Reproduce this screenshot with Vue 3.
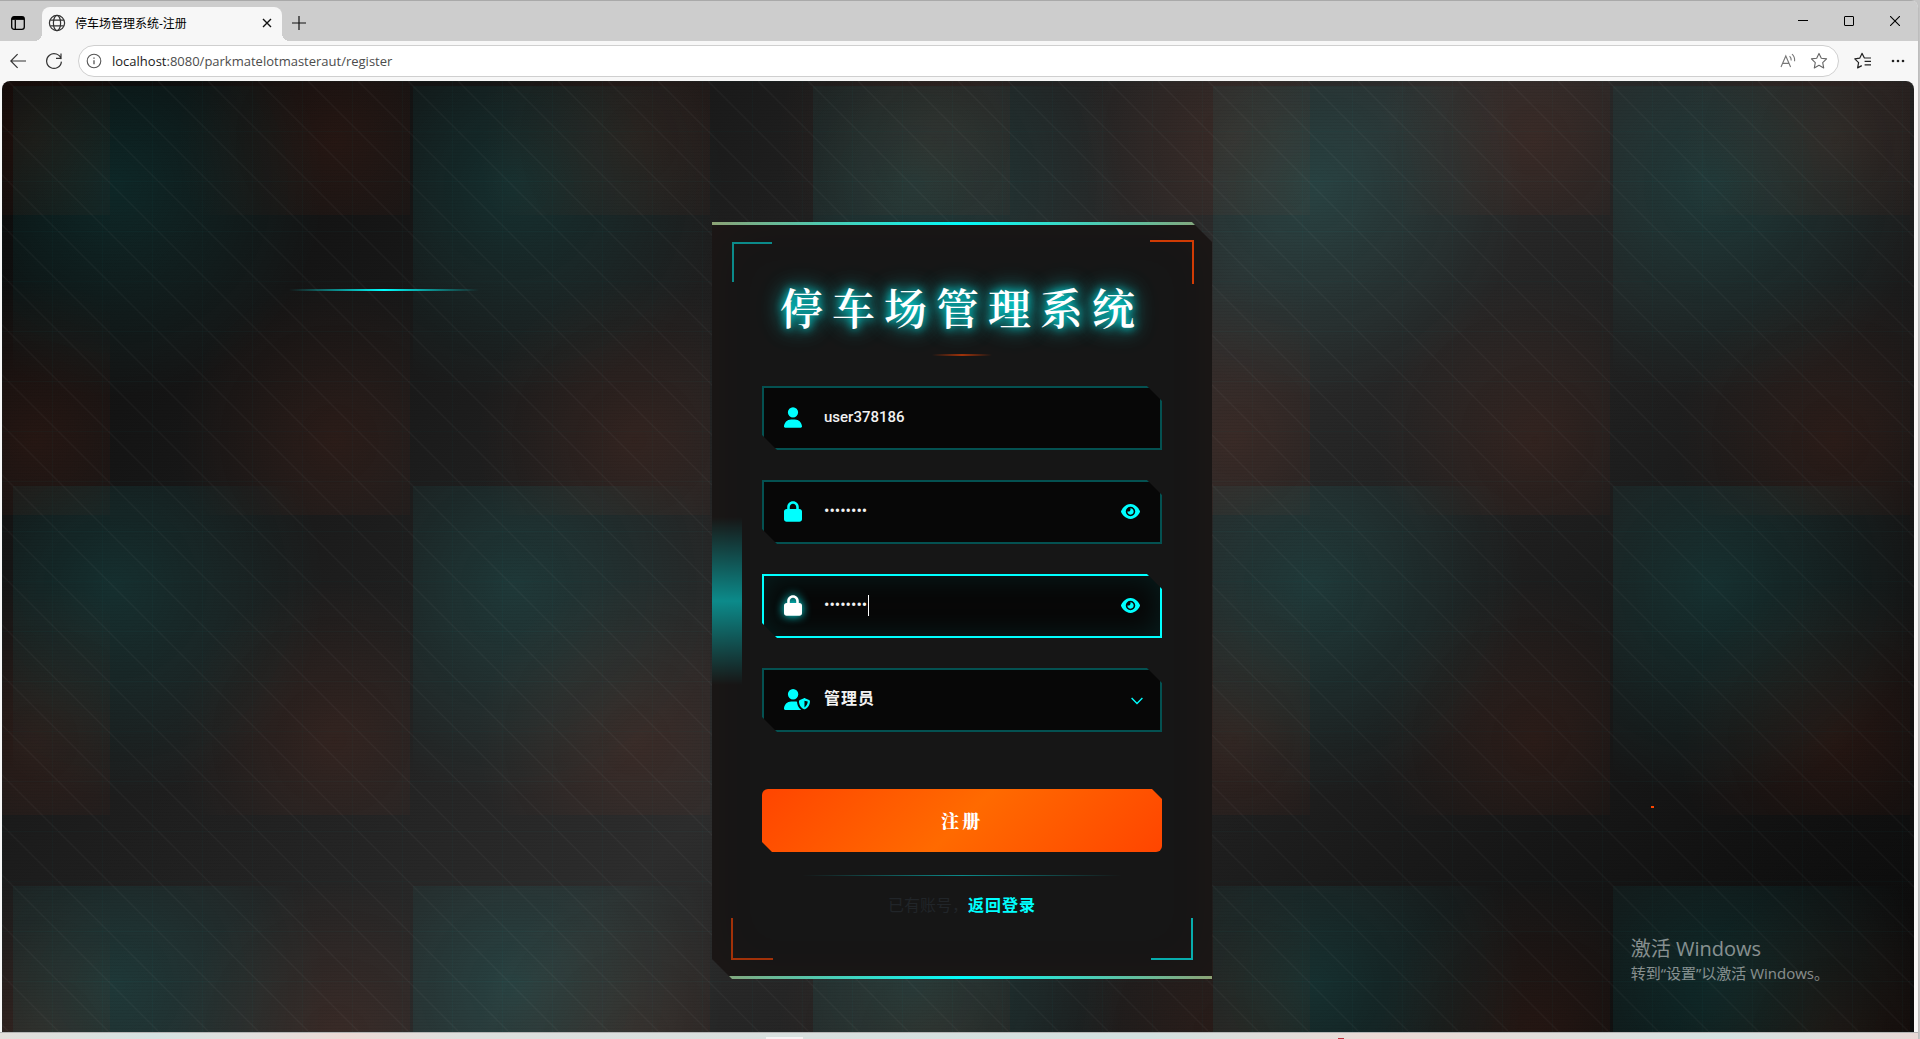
<script setup>
import { ref } from 'vue'

const form = ref({
  username: 'user378186',
  password: '12345678',
  confirm: '12345678',
  role: 'admin'
})

// which password boxes are shown as plain text
const visible = ref({ password: false, confirm: false })

const toggle = (key) => {
  visible.value[key] = !visible.value[key]
}

const passwordFields = [
  { key: 'password', label: '密码', active: false },
  { key: 'confirm', label: '确认密码', active: true }
]
</script>

<template>
  <div class="browser">
    <header class="tab-strip">
      <button class="icon-btn tab-actions" aria-label="标签页操作">
        <svg width="16" height="16" viewBox="0 0 16 16" fill="none" stroke="#000" stroke-width="1.3">
          <rect x="1.7" y="1.7" width="12.6" height="12.6" rx="2.4" />
          <path d="M2 3.4h12" stroke-width="3" />
          <path d="M5.3 5v9" />
        </svg>
      </button>
      <div class="tab">
        <svg width="18" height="18" viewBox="0 0 18 18" fill="none" stroke="#333" stroke-width="1.2">
          <circle cx="9" cy="9" r="7.6" />
          <ellipse cx="9" cy="9" rx="3.6" ry="7.6" />
          <path d="M2.2 6.2h13.6M2.2 11.8h13.6" />
        </svg>
        <span class="tab-title">停车场管理系统-注册</span>
        <button class="icon-btn" aria-label="关闭标签页">
          <svg width="10" height="10" viewBox="0 0 10 10" stroke="#111" stroke-width="1.4">
            <path d="M1 1l8 8M9 1l-8 8" />
          </svg>
        </button>
      </div>
      <button class="icon-btn new-tab" aria-label="新建标签页">
        <svg width="14" height="14" viewBox="0 0 14 14" stroke="#111" stroke-width="1.2">
          <path d="M7 0v14M0 7h14" />
        </svg>
      </button>
      <div class="window-buttons">
        <button class="icon-btn" aria-label="最小化">
          <svg width="10" height="10" viewBox="0 0 10 10" stroke="#000"><path d="M0 4.5h10" /></svg>
        </button>
        <button class="icon-btn" aria-label="最大化">
          <svg width="10" height="10" viewBox="0 0 10 10" fill="none" stroke="#000">
            <rect x=".5" y=".5" width="9" height="9" rx=".5" />
          </svg>
        </button>
        <button class="icon-btn" aria-label="关闭">
          <svg width="10" height="10" viewBox="0 0 10 10" stroke="#000" stroke-width="1.1">
            <path d="M0 0l10 10M10 0L0 10" />
          </svg>
        </button>
      </div>
    </header>

    <div class="toolbar">
      <button class="icon-btn" aria-label="返回">
        <svg width="16" height="16" viewBox="0 0 16 16" fill="none" stroke="#333" stroke-width="1.2">
          <path d="M16 8H.8M7.6 1.2L.8 8l6.8 6.8" />
        </svg>
      </button>
      <button class="icon-btn" aria-label="刷新">
        <svg width="18" height="18" viewBox="0 0 18 18" fill="none" stroke="#333" stroke-width="1.2">
          <path d="M16.2 7.2A7.4 7.4 0 1 0 16.4 9.6M16 1.4v5H11" />
        </svg>
      </button>
      <div class="address">
        <svg width="16" height="16" viewBox="0 0 16 16" fill="none" stroke="#555" stroke-width="1.1">
          <circle cx="8" cy="8" r="6.8" />
          <path d="M8 7.2v4M8 4.6v1.2" stroke-width="1.3" />
        </svg>
        <span class="url"><b>localhost</b>:8080/parkmatelotmasteraut/register</span>
        <button class="icon-btn" aria-label="大声朗读">
          <svg width="16" height="16" viewBox="0 0 16 16" fill="none" stroke="#777" stroke-width="1.1">
            <path d="M1 14L5.8 3l4.8 11M2.8 10.4h6M9.6 3.2q1.6 1.6 1.6 4.2M12 1.2q3 2.6 2.6 7" />
          </svg>
        </button>
        <button class="icon-btn" aria-label="收藏此页">
          <svg width="18" height="18" viewBox="0 0 18 18" fill="none" stroke="#666" stroke-width="1.1" stroke-linejoin="round">
            <path d="M9 1.4l2.3 4.8 5.3.7-3.9 3.7 1 5.3L9 13.3l-4.7 2.6 1-5.3L1.4 6.9l5.3-.7z" />
          </svg>
        </button>
      </div>
      <button class="icon-btn" aria-label="收藏夹">
        <svg width="18" height="18" viewBox="0 0 18 18" fill="none" stroke="#222" stroke-width="1.2" stroke-linejoin="round">
          <path d="M11.600 6H10.400L8 1.400 5.700 6.200.8 6.900l3.800 3.700-1 5.300L7.800 13.600M11.600 6H17M10.600 9.400H17M10.600 12.800H17" />
        </svg>
      </button>
      <button class="icon-btn more" aria-label="设置及其他">
        <svg width="14" height="4" viewBox="0 0 14 4" fill="#222">
          <circle cx="2" cy="2" r="1.3" /><circle cx="7" cy="2" r="1.3" /><circle cx="12" cy="2" r="1.3" />
        </svg>
      </button>
    </div>

    <main class="page">
      <span class="streak"></span>
      <span class="spark"></span>

      <form class="card" @submit.prevent>
        <span class="side-glow"></span>
        <span class="corner top-left"></span>
        <span class="corner top-right"></span>
        <span class="corner bottom-left"></span>
        <span class="corner bottom-right"></span>

        <h1 class="title">停车场管理系统</h1>

        <div class="fields">
          <div class="field">
            <label class="field-icon" for="username" aria-label="用户名">
              <svg width="18" height="21" viewBox="0 0 448 512" fill="currentColor">
                <path d="M224 256a128 128 0 1 0 0-256 128 128 0 1 0 0 256zm-45.700 48C79.800 304 0 383.800 0 482.300 0 498.700 13.300 512 29.700 512h388.600c16.400 0 29.700-13.300 29.700-29.700C448 383.800 368.200 304 269.700 304z" />
              </svg>
            </label>
            <input id="username" v-model="form.username" type="text" />
          </div>

          <div
            v-for="item in passwordFields"
            :key="item.key"
            class="field"
            :class="{ active: item.active }"
          >
            <label class="field-icon" :for="item.key" :aria-label="item.label">
              <svg width="18" height="21" viewBox="0 0 448 512" fill="currentColor">
                <path d="M144 144v48h160v-48c0-44.200-35.800-80-80-80s-80 35.800-80 80zm-64 48v-48C80 64.500 144.500 0 224 0s144 64.500 144 144v48h16c35.300 0 64 28.700 64 64v192c0 35.300-28.700 64-64 64H64c-35.300 0-64-28.700-64-64V256c0-35.300 28.700-64 64-64z" />
              </svg>
            </label>
            <input
              :id="item.key"
              v-model="form[item.key]"
              class="secret"
              :type="visible[item.key] ? 'text' : 'password'"
            />
            <span v-if="item.active" class="caret"></span>
            <button type="button" class="eye" aria-label="显示密码" @click="toggle(item.key)">
              <svg width="19" height="17" viewBox="0 0 576 512" fill="currentColor">
                <path d="M288 32c-80.800 0-145.500 36.800-192.600 80.600C48.600 156 17.300 208 2.500 243.700c-3.300 7.900-3.300 16.700 0 24.600C17.300 304 48.600 356 95.400 399.400 142.500 443.200 207.200 480 288 480s145.500-36.800 192.600-80.600c46.800-43.500 78.100-95.400 93-131.100 3.300-7.900 3.300-16.700 0-24.600-14.900-35.700-46.200-87.700-93-131.100C433.500 68.800 368.800 32 288 32zM144 256a144 144 0 1 1 288 0 144 144 0 1 1-288 0zm144-64c0 35.300-28.700 64-64 64-7.100 0-13.900-1.200-20.300-3.300-5.500-1.800-11.900 1.600-11.700 7.400.3 6.900 1.300 13.800 3.200 20.700 13.700 51.200 66.400 81.600 117.600 67.900s81.600-66.400 67.900-117.600c-11.100-41.500-47.800-69.400-88.600-71.100-5.800-.2-9.200 6.100-7.400 11.700 2.100 6.400 3.300 13.200 3.300 20.300z" />
              </svg>
            </button>
          </div>

          <div class="field">
            <label class="field-icon" for="role" aria-label="角色">
              <svg width="26" height="21" viewBox="0 0 640 512" fill="currentColor" fill-rule="evenodd">
                <path d="M224 256a128 128 0 1 0 0-256 128 128 0 1 0 0 256zm-45.700 48C79.800 304 0 383.800 0 482.300 0 498.700 13.300 512 29.700 512h388.600c1.800 0 3.500-.2 5.300-.5-76.300-55.100-99.800-141-103.100-200.200-16.100-4.800-33.100-7.300-50.700-7.300z" />
                <path d="M491.300 224.700c7.900-3.600 17.500-3.600 25.400 0l100.700 41c12.700 4.700 22.300 16.400 22.200 31.100-.3 50-20.700 146.400-112.700 192.500-12.600 6.300-33.200 6.300-45.800 0-92-46.100-112.400-142.500-112.700-192.500-.1-14.700 9.500-26.400 22.200-31.100zM504 284.100v166.300c59.700-34.200 77-98.400 79.900-143.300z" />
              </svg>
            </label>
            <select id="role" v-model="form.role">
              <option value="admin">管理员</option>
              <option value="user">用户</option>
            </select>
            <svg class="chevron" width="12" height="8" viewBox="0 0 12 8" fill="none" stroke="#0ff" stroke-width="1.400">
              <path d="M.6 1L6 6.400 11.400 1" />
            </svg>
          </div>
        </div>

        <button type="submit" class="submit">注册</button>

        <p class="footer">已有账号，<a href="#login">返回登录</a></p>
      </form>

      <aside class="watermark">
        <p>激活 Windows</p>
        <p class="small">转到“设置”以激活 Windows。</p>
      </aside>
    </main>

    <footer class="taskbar"></footer>
  </div>
</template>

<style>
body {
  margin: 0;
  background: #c4c4c4;
}
</style>

<style scoped>
* {
  box-sizing: border-box;
}

.browser {
  min-height: 100vh;
  margin-right: 1px;
  display: flex;
  flex-direction: column;
  background: #f7f7f7;
  border-right: 1px solid #bdbdbd;
  border-top-right-radius: 8px;
  overflow: hidden;
  font-family: "Open Sans", "Noto Sans CJK SC", sans-serif;
}

button {
  border: none;
  padding: 0;
  background: none;
  cursor: pointer;
}
.icon-btn {
  display: flex;
  align-items: center;
  justify-content: center;
}
svg {
  flex: none;
}

/* tab strip */
.tab-strip {
  height: 41px;
  display: flex;
  align-items: flex-end;
  background: #cdcdcd;
  border-top: 1px solid #a9a9a9;
}
.tab-actions {
  width: 42px;
  height: 34px;
  padding-right: 6px;
  padding-bottom: 2px;
}
.tab {
  position: relative;
  width: 240px;
  height: 34px;
  padding: 0 10px 2px 6px;
  display: flex;
  align-items: center;
  background: #f7f7f7;
  border-radius: 8px 8px 0 0;
}
.tab::before,
.tab::after {
  content: '';
  position: absolute;
  bottom: 0;
  width: 8px;
  height: 8px;
}
.tab::before {
  left: -8px;
  background: radial-gradient(circle at 0 0, transparent 8px, #f7f7f7 8px);
}
.tab::after {
  right: -8px;
  background: radial-gradient(circle at 100% 0, transparent 8px, #f7f7f7 8px);
}
.tab-title {
  flex: 1;
  padding-left: 9px;
  font-size: 12px;
  color: #000;
}
.new-tab {
  width: 34px;
  height: 34px;
  padding-bottom: 2px;
}
.window-buttons {
  margin-left: auto;
  align-self: flex-start;
  display: flex;
}
.window-buttons .icon-btn {
  width: 46px;
  height: 40px;
}

/* toolbar */
.toolbar {
  height: 40px;
  padding: 0 13px 0 10px;
  display: flex;
  align-items: center;
  gap: 15px;
}
.toolbar > .icon-btn:first-child {
  margin-right: 4px;
}
.address {
  flex: 1;
  height: 32px;
  padding: 0 10px 0 7px;
  display: flex;
  align-items: center;
  gap: 14px;
  background: #fff;
  border: 1px solid #cfcfcf;
  border-radius: 16px;
}
.url {
  flex: 1;
  margin-left: -4px;
  font-size: 13px;
  color: #4c4c4c;
}
.url b {
  font-weight: 400;
  color: #1a1a1a;
}
.more {
  margin-left: 4px;
}

/* page background */
.page {
  position: relative;
  flex: 1;
  margin: 0 4px 0 2px;
  padding: 141px 0 0 8px;
  display: flex;
  justify-content: center;
  align-items: flex-start;
  border-radius: 8px 8px 0 0;
  overflow: hidden;
  background:
    repeating-linear-gradient(0deg, rgba(0, 0, 0, 0.05) 0 1px, transparent 1px 3px),
    linear-gradient(90deg, rgba(0, 255, 255, 0.02) 1px, transparent 1px) 0 0 / 50px 50px,
    linear-gradient(rgba(0, 255, 255, 0.02) 1px, transparent 1px) 0 0 / 50px 50px,
    linear-gradient(45deg, transparent 48%, rgba(255, 255, 255, 0.03) 50%, transparent 52%) 6px 0 / 50px 50px,
    radial-gradient(circle at 25% 25%, rgba(0, 255, 255, 0.1) 0%, transparent 50%) 11px 5px / 400px 400px,
    radial-gradient(circle at 75% 75%, rgba(255, 62, 15, 0.08) 0%, transparent 50%) 108px 134px / 300px 300px,
    linear-gradient(135deg, #0a0a0a 0%, #1a1a1a 25%, #2d2d2d 50%, #1a1a1a 75%, #0a0a0a 100%);
}
.streak {
  position: absolute;
  left: 15%;
  top: 208px;
  width: 190px;
  height: 2px;
  background: linear-gradient(90deg, transparent, #0ff, transparent);
}
.spark {
  position: absolute;
  left: 86%;
  top: 725px;
  width: 3px;
  height: 2px;
  margin-left: 5px;
  background: #ff4500;
}

/* card */
.card {
  position: relative;
  width: 500px;
  padding: 58px 50px 63px;
  background:
    linear-gradient(90deg, #8aa578, #0ff, #8aa578) top / 100% 3px no-repeat,
    linear-gradient(90deg, #8aa578, #0ff, #8aa578) bottom / 100% 3px no-repeat,
    #161616;
  box-shadow: inset 0 0 60px rgba(255, 69, 0, 0.04);
  clip-path: polygon(0 0, calc(100% - 20px) 0, 100% 20px, 100% 100%, 20px 100%, 0 calc(100% - 20px));
}
.side-glow {
  position: absolute;
  left: 0;
  top: calc(50% - 84px);
  width: 30px;
  height: 168px;
  background: linear-gradient(transparent, rgba(0, 255, 255, 0.5), transparent);
}
.corner {
  position: absolute;
  width: 44px;
  height: 44px;
  border: 0 solid #0ff;
}
.top-left {
  top: 20px;
  left: 20px;
  width: 40px;
  height: 40px;
  border-width: 2px 0 0 2px;
  opacity: 0.5;
}
.top-right {
  top: 18px;
  right: 18px;
  border-color: #ff4500;
  border-width: 2px 2px 0 0;
  opacity: 0.8;
}
.bottom-left {
  bottom: 19px;
  left: 19px;
  width: 42px;
  height: 42px;
  border-color: #ff4500;
  border-width: 0 0 2px 2px;
  opacity: 0.6;
}
.bottom-right {
  right: 19px;
  bottom: 19px;
  width: 42px;
  height: 42px;
  border-width: 0 2px 2px 0;
  opacity: 0.65;
}

.title {
  margin: 0 0 30px;
  font-family: "Noto Serif CJK SC", "Noto Sans CJK SC", serif;
  font-size: 43px;
  font-weight: 600;
  line-height: 54px;
  letter-spacing: 9px;
  text-align: center;
  white-space: nowrap;
  color: #fff;
  text-shadow: 0 0 10px #0ff, 0 0 20px rgba(0, 255, 255, 0.7), 0 0 30px rgba(0, 255, 255, 0.3);
}
.title::after {
  content: '';
  display: block;
  width: 60px;
  height: 2px;
  margin: 20px auto 0;
  background: linear-gradient(90deg, transparent, #ff4500, transparent);
  opacity: 0.6;
}

.fields {
  display: flex;
  flex-direction: column;
  gap: 30px;
}
.field {
  position: relative;
  height: 64px;
  padding: 0 20px 2px;
  display: flex;
  align-items: center;
  background: #070707;
  border: 2px solid rgba(0, 255, 255, 0.3);
  clip-path: polygon(0 0, calc(100% - 15px) 0, 100% 15px, 100% 100%, 15px 100%, 0 calc(100% - 15px));
}
.field-icon {
  width: 40px;
  display: flex;
  color: #0ff;
}
.field input,
.field select {
  flex: 1;
  min-width: 0;
  height: 58px;
  padding: 0 0 1px;
  border: none;
  outline: none;
  background: transparent;
  color: #f2f2f2;
  font-family: Roboto, "Noto Sans CJK SC", sans-serif;
  font-size: 15px;
  font-weight: 500;
}
.field .secret {
  font-size: 16px;
  font-weight: 400;
}
.field select {
  appearance: none;
  font-size: 16px;
  font-weight: 700;
  letter-spacing: 1px;
}
.field option {
  color: #000;
}
.field.active {
  border-color: #0ff;
  box-shadow: inset 0 0 30px rgba(0, 255, 255, 0.1);
}
.active .field-icon {
  color: #fff;
  filter: drop-shadow(0 0 5px #0ff);
}
.caret {
  position: absolute;
  left: 104px;
  top: 19px;
  width: 1px;
  height: 21px;
  background: #fff;
}
.eye {
  display: flex;
  color: #0ff;
}
.chevron {
  position: absolute;
  right: 17px;
  top: 27px;
  pointer-events: none;
}

.submit {
  width: 100%;
  height: 63px;
  margin-top: 57px;
  padding-bottom: 2px;
  border-radius: 6px;
  background: linear-gradient(135deg, #ff4500, #ff6a00 50%, #ff4500);
  clip-path: polygon(0 0, calc(100% - 10px) 0, 100% 10px, 100% 100%, 10px 100%, 0 calc(100% - 10px));
  color: #fff;
  font-family: "Noto Serif CJK SC", "Noto Sans CJK SC", serif;
  font-size: 18px;
  font-weight: 900;
  letter-spacing: 3px;
}

.footer {
  margin: 23px 0 0;
  font-family: "Noto Sans CJK SC", sans-serif;
  font-size: 16px;
  line-height: 24px;
  text-align: center;
  color: #212529;
}
.footer::before {
  content: '';
  display: block;
  width: 80%;
  height: 1px;
  margin: 0 auto 16px;
  background: linear-gradient(90deg, transparent, rgba(0, 255, 255, 0.5), transparent);
}
.footer a {
  color: #0ff;
  font-weight: 700;
  letter-spacing: 1px;
  text-decoration: none;
}

.watermark {
  position: absolute;
  right: 85px;
  bottom: 48px;
  color: rgba(255, 255, 255, 0.5);
  pointer-events: none;
}
.watermark p {
  margin: 0;
  font-size: 20px;
  line-height: 26px;
}
.watermark .small {
  font-size: 15px;
  line-height: 22px;
}

.taskbar {
  height: 7px;
  border-top: 1px solid #b5b5b5;
  background:
    linear-gradient(#f4f4f4, #f4f4f4) 766px 4px / 37px 2px no-repeat,
    linear-gradient(#c0303c, #c0303c) 1338px 5px / 6px 1px no-repeat,
    linear-gradient(90deg, #e2dfdb, #d5e3e2 8%, #e2e0de 13%, #ecdad5 18%, #dde0de 24%, #d3e1e0 60%, #ecdad5 72%, #d5e3e2 90%, #e8d9d6);
}
</style>
